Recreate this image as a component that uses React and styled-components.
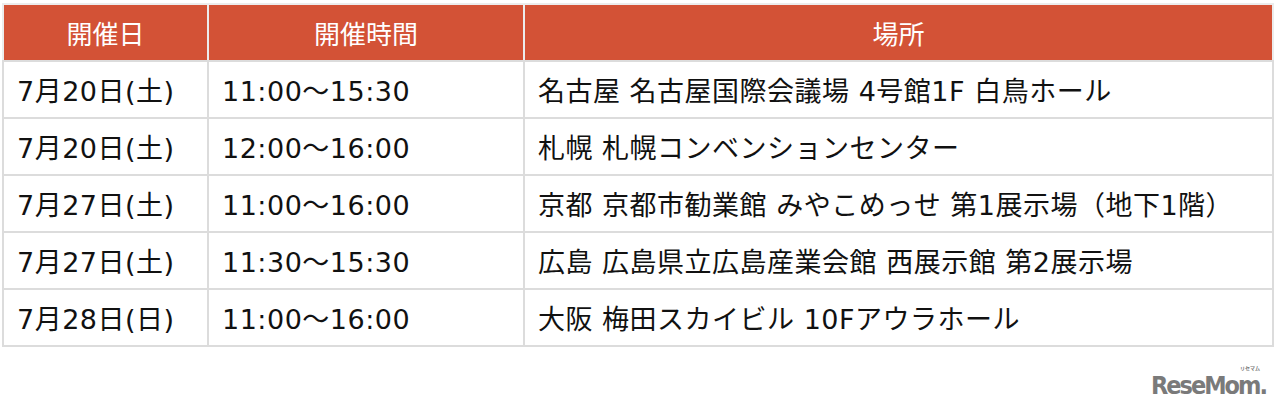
import React from "react";
import styled, { createGlobalStyle } from "styled-components";

const Global = createGlobalStyle`
  html, body { margin: 0; padding: 0; background: #fff; }
  body { font-family: "DejaVu Sans", "Noto Sans CJK JP", sans-serif; }
`;

const Page = styled.div`
  width: 1280px;
  height: 405px;
  box-sizing: border-box;
  padding: 3px 8px 0 2px;
  display: flex;
  flex-direction: column;
`;

const Table = styled.table`
  width: 1270px;
  border-collapse: collapse;
  table-layout: fixed;
`;

const HeadCell = styled.th`
  height: 55px;
  padding: 0;
  background: #d35236;
  color: #fff;
  font-family: "Noto Sans CJK JP", sans-serif;
  font-weight: 400;
  font-size: 26px;
  text-align: center;
  vertical-align: middle;
  border: 2px solid #ececec;
  border-bottom-color: #dcdcdc;
  line-height: 1;
`;

const Cell = styled.td`
  height: 51px;
  padding: 4px 0 0 13px;
  font-family: "DejaVu Sans", "Noto Sans CJK JP", sans-serif;
  font-size: 27px;
  letter-spacing: 0.5px;
  color: #111;
  border: 2px solid #dcdcdc;
  vertical-align: middle;
  white-space: nowrap;
  line-height: 1;
`;

const Footer = styled.div`
  display: flex;
  justify-content: flex-end;
  padding: 26px 6px 0 0;
`;

const Logo = styled.div`
  position: relative;
  font-family: "DejaVu Sans Condensed", "DejaVu Sans", sans-serif;
  font-stretch: condensed;
  font-weight: 700;
  font-size: 25px;
  letter-spacing: -2px;
  color: #7a7a7a;
  line-height: 1;
`;

const LogoKana = styled.span`
  position: absolute;
  right: 6px;
  top: -8px;
  font-family: "Noto Sans CJK JP", sans-serif;
  font-size: 5px;
  line-height: 1;
  font-weight: 700;
  letter-spacing: 0;
`;

const rows = [
  ["7月20日(土)", "11:00〜15:30", "名古屋 名古屋国際会議場 4号館1F 白鳥ホール"],
  ["7月20日(土)", "12:00〜16:00", "札幌 札幌コンベンションセンター"],
  ["7月27日(土)", "11:00〜16:00", "京都 京都市勧業館 みやこめっせ 第1展示場（地下1階）"],
  ["7月27日(土)", "11:30〜15:30", "広島 広島県立広島産業会館 西展示館 第2展示場"],
  ["7月28日(日)", "11:00〜16:00", "大阪 梅田スカイビル 10Fアウラホール"],
];

export default function App() {
  return (
    <>
      <Global />
      <Page>
        <Table>
          <colgroup>
            <col style={{ width: 205 }} />
            <col style={{ width: 316 }} />
            <col style={{ width: 749 }} />
          </colgroup>
          <thead>
            <tr>
              <HeadCell>開催日</HeadCell>
              <HeadCell>開催時間</HeadCell>
              <HeadCell>場所</HeadCell>
            </tr>
          </thead>
          <tbody>
            {rows.map((r, i) => (
              <tr key={i}>
                {r.map((c, j) => (
                  <Cell key={j}>{c}</Cell>
                ))}
              </tr>
            ))}
          </tbody>
        </Table>
        <Footer>
          <Logo>
            ReseMom.
            <LogoKana>リセマム</LogoKana>
          </Logo>
        </Footer>
      </Page>
    </>
  );
}
